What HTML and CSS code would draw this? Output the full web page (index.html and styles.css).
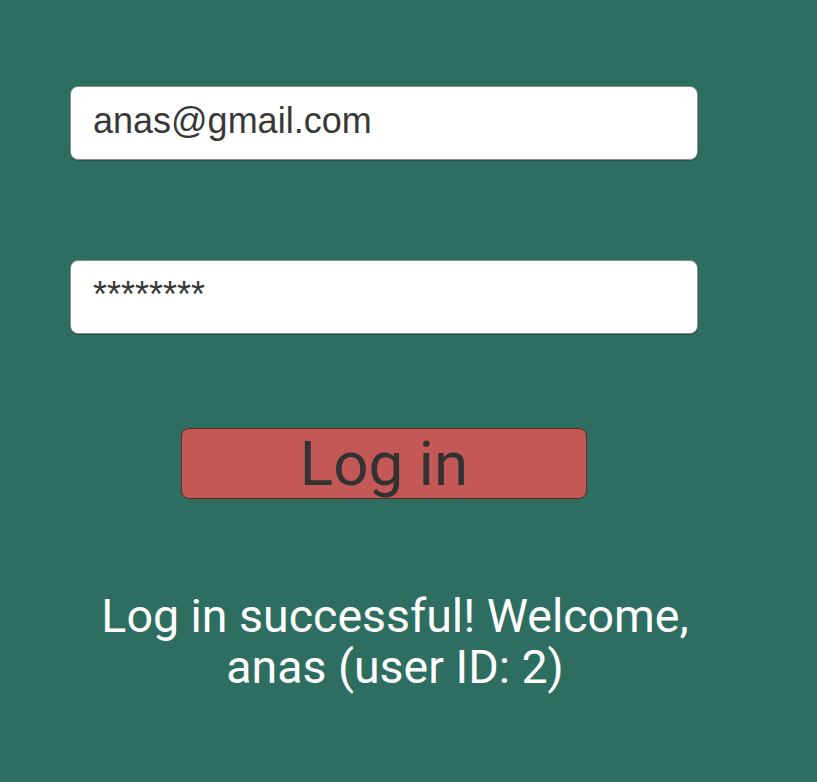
FILE: index.html
```html
<!DOCTYPE html>
<html>
<head>
<meta charset="utf-8">
<link rel="stylesheet" href="styles.css">
</head>
<body>
<div class="panel">
  <div class="field"><span class="field-text">anas@gmail.com</span></div>
  <div class="field field-pass"><span class="field-text">********</span></div>
  <div class="btn-row"><div class="btn">Log in</div></div>
  <div class="message">Log in successful! Welcome,<br>anas (user ID: 2)</div>
</div>
</body>
</html>
```
FILE: styles.css
```css
html, body {
  margin: 0;
  padding: 0;
  background: #2e6e60;
  width: 817px;
  height: 782px;
  overflow: hidden;
}
.panel {
  display: flex;
  flex-direction: column;
  padding: 86px 0 0 70px;
  width: 628px;
}
.field {
  box-sizing: border-box;
  height: 74px;
  width: 628px;
  background: #fff;
  border-radius: 8px;
  border: 1px solid #8a8a8a;
  box-shadow: 0 1px 1px rgba(0,0,0,0.25);
  display: flex;
  align-items: flex-start;
  padding: 14px 0 0 22px;
}
.field-text {
  font-family: "Liberation Sans", Arial, sans-serif;
  font-size: 36px;
  line-height: 40px;
  color: #383838;
}
.field-pass {
  margin-top: 100px;
}
.btn-row {
  display: flex;
  padding-left: 111px;
  margin-top: 94px;
}
.btn {
  box-sizing: border-box;
  width: 406px;
  height: 71px;
  background: #c45856;
  border: 1px solid #5a2a2a;
  border-radius: 8px;
  font-family: Roboto, sans-serif;
  font-size: 62px;
  line-height: 70px;
  color: #323232;
  text-align: center;
}
.message {
  margin-top: 92px;
  margin-left: 22px;
  font-family: Roboto, sans-serif;
  font-size: 46.5px;
  line-height: 51px;
  color: #fff;
  text-align: center;
}
```
